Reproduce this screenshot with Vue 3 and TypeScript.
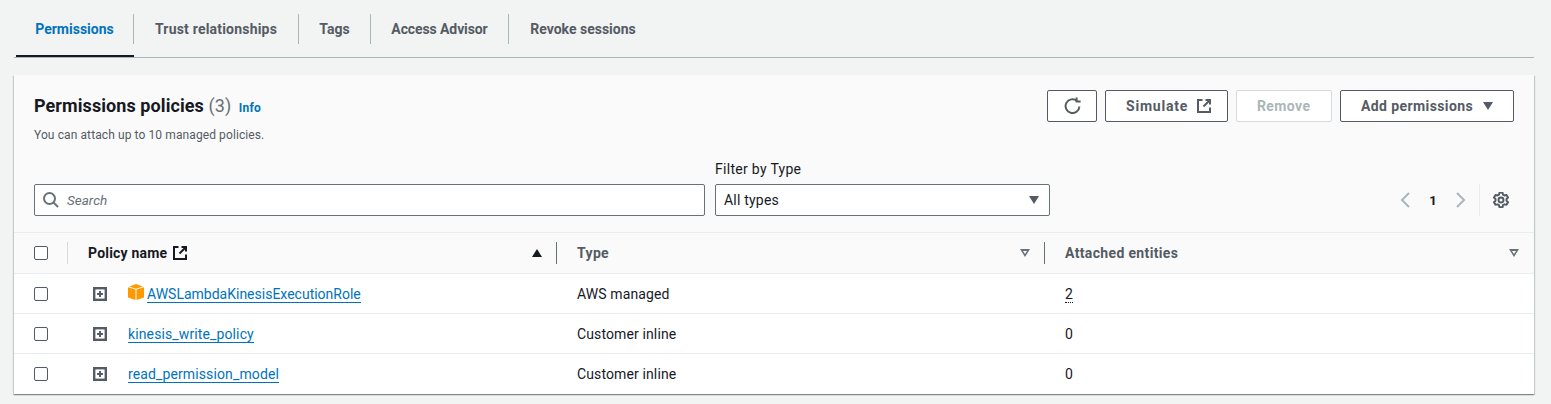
<script setup lang="ts">
interface Policy {
  name: string
  type: string
  entities: string
  managed?: boolean
}

const tabs = [
  { label: 'Permissions', width: 118, spacing: 0 },
  { label: 'Trust relationships', width: 165, spacing: 0.2 },
  { label: 'Tags', width: 72, spacing: 0 },
  { label: 'Access Advisor', width: 138, spacing: -0.1 },
  { label: 'Revoke sessions', width: 148, spacing: 0 }
]

const policies: Policy[] = [
  { name: 'AWSLambdaKinesisExecutionRole', type: 'AWS managed', entities: '2', managed: true },
  { name: 'kinesis_write_policy', type: 'Customer inline', entities: '0' },
  { name: 'read_permission_model', type: 'Customer inline', entities: '0' }
]
</script>

<template>
  <div class="page">
    <nav class="tabs">
      <a
        v-for="(tab, i) in tabs"
        :key="tab.label"
        :class="['tab', { 'tab--active': i === 0 }]"
        :style="{ width: tab.width + 'px', letterSpacing: tab.spacing + 'px' }"
      >
        {{ tab.label }}
      </a>
    </nav>

    <section class="card">
      <header class="card-head">
        <div class="title-row">
          <div class="title-block">
            <h2 class="title">Permissions policies <span class="count">(3)</span> <a class="info">Info</a></h2>
            <p class="subtitle">You can attach up to 10 managed policies.</p>
          </div>
          <div class="actions">
            <button class="btn btn--icon">
              <svg width="18" height="18" viewBox="0 0 18 18" fill="none" stroke="#545b64" stroke-width="2">
                <path d="M15.4 9.5a6.9 6.9 0 1 1-2.4-5.6" />
                <path d="M12.6 0.6v4h4" />
              </svg>
            </button>
            <button class="btn btn--simulate">
              Simulate
              <svg width="16" height="16" viewBox="0 0 16 16" fill="none" stroke="#545b64" stroke-width="2">
                <path d="M6.5 2H2v12h12V9.5" />
                <path d="M9.5 2H14v4.5" />
                <path d="M14 2L7.5 8.5" />
              </svg>
            </button>
            <button class="btn btn--remove" disabled>Remove</button>
            <button class="btn btn--add">
              Add permissions
              <span class="caret"></span>
            </button>
          </div>
        </div>

        <div class="filter-row">
          <label class="search">
            <svg width="16" height="16" viewBox="0 0 16 16" fill="none" stroke="#687078" stroke-width="2">
              <circle cx="6.5" cy="6.5" r="5.5" />
              <path d="M10.5 10.5l4.5 4.5" />
            </svg>
            <span class="placeholder">Search</span>
          </label>
          <div class="filter">
            <span class="filter-label">Filter by Type</span>
            <div class="select">
              <span class="select-value">All types</span>
              <span class="caret"></span>
            </div>
          </div>
          <div class="pager">
            <svg width="12" height="16" viewBox="0 0 12 16" fill="none" stroke="#aab7b8" stroke-width="2">
              <path d="M10 1L3 8l7 7" />
            </svg>
            <span class="page-num">1</span>
            <svg width="12" height="16" viewBox="0 0 12 16" fill="none" stroke="#aab7b8" stroke-width="2">
              <path d="M2 1l7 7-7 7" />
            </svg>
            <span class="pager-rule"></span>
            <svg class="gear" width="16" height="16" viewBox="0.6 0.6 14.8 14.8" fill="none" stroke="#545b64" stroke-width="1.8">
              <circle cx="8" cy="8" r="2.3" />
              <path d="M6.6 1.2h2.8l.5 1.9 1.3.7 1.9-.5 1.4 2.4-1.4 1.4v1.6l1.4 1.4-1.4 2.4-1.9-.5-1.3.7-.5 1.9H6.6l-.5-1.9-1.3-.7-1.9.5-1.4-2.4 1.4-1.4V7.1L1.5 5.7l1.4-2.4 1.9.5 1.3-.7z" stroke-linejoin="round" />
            </svg>
          </div>
        </div>
      </header>

      <div class="table">
        <div class="row row--head">
          <div class="cell cell--check">
            <span class="check"></span>
            <span class="rule rule--light"></span>
          </div>
          <div class="cell cell--head cell--name">
            <span class="head-strong">Policy name</span>
            <svg width="16" height="16" viewBox="0 0 16 16" fill="none" stroke="#16191f" stroke-width="2">
              <path d="M6.5 2H2v12h12V9.5" />
              <path d="M9.5 2H14v4.5" />
              <path d="M14 2L7.5 8.5" />
            </svg>
            <span class="sort sort--up"></span>
            <span class="rule"></span>
          </div>
          <div class="cell cell--head">
            <span>Type</span>
            <span class="sort sort--down"></span>
            <span class="rule"></span>
          </div>
          <div class="cell cell--head">
            <span>Attached entities</span>
            <span class="sort sort--down"></span>
          </div>
        </div>

        <div v-for="policy in policies" :key="policy.name" class="row row--body">
          <div class="cell cell--check"><span class="check"></span></div>
          <div class="cell cell--policy">
            <svg class="expand" width="14" height="14" viewBox="0 0 14 14" fill="none" stroke="#545b64">
              <rect x="1.2" y="1.2" width="11.6" height="11.6" stroke-width="2.4" />
              <path d="M7 4v6M4 7h6" stroke-width="2" />
            </svg>
            <svg v-if="policy.managed" class="cube" width="16" height="16" viewBox="0 0 16 16">
              <path d="M0 3.3L7.5 5.6V16L0 13.6z" fill="#f90" />
              <path d="M16 3.3L8.5 5.6V16l7.5-2.4z" fill="#f90" />
              <path d="M8 0l6.8 2.5L8 4.7 1.2 2.5z" fill="#f90" />
            </svg>
            <a :class="['link', { 'link--wide': !policy.managed }]">{{ policy.name }}</a>
          </div>
          <div class="cell cell--type">{{ policy.type }}</div>
          <div class="cell">
            <span :class="{ dotted: policy.entities !== '0' }">{{ policy.entities }}</span>
          </div>
        </div>
      </div>
    </section>
  </div>
</template>

<style>
html,
body {
  margin: 0;
  background: #f2f3f3;
}
</style>

<style scoped>
.page {
  width: 1551px;
  height: 404px;
  box-sizing: border-box;
  padding: 0 17px 0 14px;
  background: #f2f3f3;
  font-family: Roboto, "Noto Sans", sans-serif;
  font-size: 14px;
  color: #16191f;
  overflow: hidden;
}

.tabs {
  display: flex;
  height: 58px;
  box-sizing: border-box;
  padding: 14px 0 0 2px;
  border-bottom: 1px solid #aab7b8;
}

.tab {
  position: relative;
  display: block;
  height: 30px;
  box-sizing: border-box;
  border-right: 1px solid #aab7b8;
  font-weight: 700;
  line-height: 30px;
  text-align: center;
  color: #545b64;
}

.tab:last-child {
  border-right: none;
}

.tab--active {
  color: #0073bb;
}

.tab--active::after {
  content: "";
  position: absolute;
  left: 0;
  right: -1px;
  top: 41px;
  height: 2px;
  background: #16191f;
}

.card {
  margin-top: 17px;
  height: 319px;
  background: #fff;
  box-shadow: 0 1px 1px 0 rgba(0, 28, 36, 0.3), 1px 1px 1px 0 rgba(0, 28, 36, 0.15), -1px 1px 1px 0 rgba(0, 28, 36, 0.15);
}

.card-head {
  height: 158px;
  box-sizing: border-box;
  padding: 15px 20px 0;
  background: #fafafa;
  border-bottom: 1px solid #eaeded;
}

.title-row {
  display: flex;
  justify-content: space-between;
  height: 62px;
}

.title {
  margin: 4px 0 0;
  font-size: 18px;
  line-height: 24px;
  font-weight: 700;
  letter-spacing: 0.08px;
}

.count {
  font-weight: 400;
  color: #687078;
}

.info {
  margin-left: 3px;
  font-size: 12px;
  color: #0073bb;
  letter-spacing: 0.2px;
}

.subtitle {
  margin: 7px 0 0;
  font-size: 12px;
  line-height: 16px;
  color: #545b64;
  letter-spacing: 0.1px;
}

.actions {
  display: flex;
  gap: 8px;
  align-items: flex-start;
}

.btn {
  display: flex;
  align-items: center;
  justify-content: flex-start;
  height: 32px;
  box-sizing: border-box;
  padding: 0 0 0 20px;
  border: 1px solid #545b64;
  border-radius: 2px;
  background: #fff;
  font: inherit;
  font-weight: 700;
  color: #545b64;
  letter-spacing: 0.4px;
}

.btn--icon {
  width: 50px;
  padding-left: 16px;
}

.btn--simulate {
  width: 123px;
  gap: 8px;
  letter-spacing: 0.8px;
}

.btn--remove {
  width: 96px;
  border-color: #d5dbdb;
  color: #aab7b8;
}

.btn--add {
  width: 174px;
  gap: 10px;
}

.caret {
  width: 0;
  height: 0;
  border-left: 5.5px solid transparent;
  border-right: 5.5px solid transparent;
  border-top: 8px solid #545b64;
}

.filter-row {
  display: flex;
  align-items: flex-end;
  height: 64px;
}

.search {
  display: flex;
  align-items: center;
  gap: 8px;
  width: 671px;
  height: 32px;
  box-sizing: border-box;
  padding-left: 8px;
  border: 1px solid #687078;
  border-radius: 2px;
  background: #fff;
}

.placeholder {
  font-style: italic;
  font-size: 13.5px;
  color: #687078;
}

.filter {
  margin-left: 10px;
  width: 335px;
}

.filter-label {
  display: block;
  margin-bottom: 7px;
  font-size: 14px;
  line-height: 16px;
  letter-spacing: 0.3px;
}

.select {
  display: flex;
  align-items: center;
  justify-content: space-between;
  height: 32px;
  box-sizing: border-box;
  padding: 0 10px 0 8px;
  border: 1px solid #687078;
  border-radius: 2px;
  background: #fff;
}

.select-value {
  letter-spacing: 0.2px;
}

.pager {
  display: flex;
  align-items: center;
  height: 32px;
  margin-left: auto;
  padding-right: 5px;
}

.page-num {
  width: 44px;
  text-align: center;
  font-weight: 700;
  font-size: 13px;
}

.pager-rule {
  width: 1px;
  height: 32px;
  margin: 0 13px 0 12px;
  background: #eaeded;
}

.row {
  display: grid;
  grid-template-columns: 54px 489px 488px 489px;
  height: 41px;
  box-sizing: border-box;
  border-bottom: 1px solid #eaeded;
}

.row--head {
  background: #fafafa;
}

.row--body {
  height: 40px;
}

.row--body .cell {
  padding-top: 1px;
}

.row--body:last-child {
  border-bottom: 1px solid transparent;
}

.cell {
  position: relative;
  display: flex;
  align-items: center;
  padding-left: 20px;
}

.check {
  width: 14px;
  height: 14px;
  box-sizing: border-box;
  border: 1px solid #545b64;
  border-radius: 2px;
  background: #fff;
}

.cell--head {
  font-weight: 700;
  color: #545b64;
  letter-spacing: 0.35px;
}

.head-strong {
  color: #16191f;
  margin-right: 5px;
  letter-spacing: 0.2px;
}

.rule {
  position: absolute;
  right: 0;
  top: 9px;
  width: 1px;
  height: 22px;
  background: #687078;
}

.rule--light {
  background: #d5dbdb;
}

.sort {
  position: absolute;
  top: 16px;
  right: 15px;
}

.sort--up {
  width: 0;
  height: 0;
  border-left: 5.5px solid transparent;
  border-right: 5.5px solid transparent;
  border-bottom: 8px solid #16191f;
}

.sort--down {
  width: 0;
  height: 0;
  border-left: 5.5px solid transparent;
  border-right: 5.5px solid transparent;
  border-top: 8px solid #687078;
}

.sort--down::after {
  content: "";
  position: absolute;
  left: -2.5px;
  top: -6px;
  width: 0;
  height: 0;
  border-left: 2.5px solid transparent;
  border-right: 2.5px solid transparent;
  border-top: 3.5px solid #fafafa;
}

.cell--policy {
  padding-left: 25px;
}

.expand {
  margin-right: 21px;
  flex: none;
}

.cube {
  margin: -4px 3px 0 0;
}

.link {
  color: #0073bb;
  border-bottom: 1px solid #0073bb;
  line-height: 16px;
}

.link--wide {
  letter-spacing: 0.12px;
}

.cell--type {
  letter-spacing: 0.12px;
}

.dotted {
  border-bottom: 1px dotted #16191f;
  line-height: 16px;
}
</style>
